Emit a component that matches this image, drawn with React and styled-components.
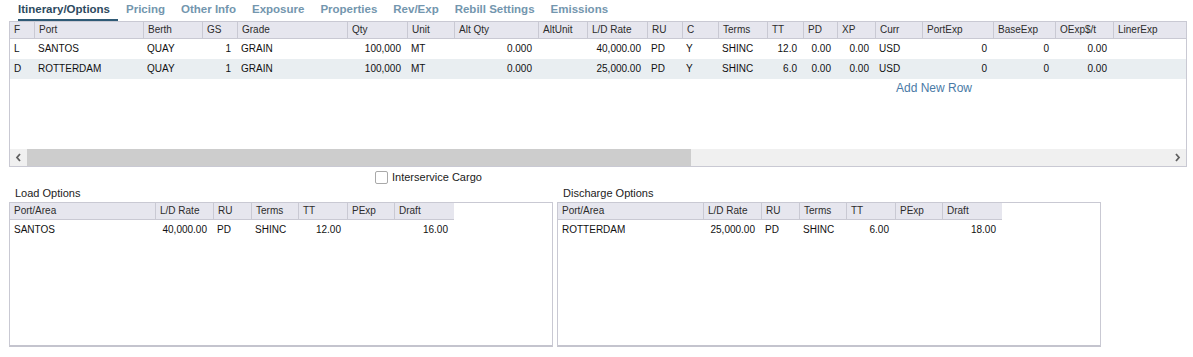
import React from 'react';
import styled, { createGlobalStyle } from 'styled-components';

const GlobalStyle = createGlobalStyle`
  body {
    margin: 0;
    background: #ffffff;
    font-family: "Liberation Sans", Arial, sans-serif;
    color: #1a1a1a;
  }
`;

const BORDER = '#c9c9d3';
const HEAD_BG = '#e6e6ee';

const columns = [
  { key: 'f', label: 'F', w: 24 },
  { key: 'port', label: 'Port', w: 109 },
  { key: 'berth', label: 'Berth', w: 59 },
  { key: 'gs', label: 'GS', w: 35, right: true },
  { key: 'grade', label: 'Grade', w: 110 },
  { key: 'qty', label: 'Qty', w: 60, right: true },
  { key: 'unit', label: 'Unit', w: 47 },
  { key: 'altQty', label: 'Alt Qty', w: 84, right: true },
  { key: 'altUnit', label: 'AltUnit', w: 49 },
  { key: 'ldRate', label: 'L/D Rate', w: 60, right: true },
  { key: 'ru', label: 'RU', w: 35 },
  { key: 'c', label: 'C', w: 36 },
  { key: 'terms', label: 'Terms', w: 49 },
  { key: 'tt', label: 'TT', w: 36, right: true },
  { key: 'pd', label: 'PD', w: 34, right: true },
  { key: 'xp', label: 'XP', w: 38, right: true },
  { key: 'curr', label: 'Curr', w: 47 },
  { key: 'portExp', label: 'PortExp', w: 71, right: true },
  { key: 'baseExp', label: 'BaseExp', w: 62, right: true },
  { key: 'oExp', label: 'OExp$/t', w: 58, right: true },
  { key: 'linerExp', label: 'LinerExp', w: 72, right: true },
];

const itinerary = [
  {
    f: 'L', port: 'SANTOS', berth: 'QUAY', gs: '1', grade: 'GRAIN', qty: '100,000', unit: 'MT',
    altQty: '0.000', altUnit: '', ldRate: '40,000.00', ru: 'PD', c: 'Y', terms: 'SHINC',
    tt: '12.0', pd: '0.00', xp: '0.00', curr: 'USD', portExp: '0', baseExp: '0', oExp: '0.00', linerExp: '',
  },
  {
    f: 'D', port: 'ROTTERDAM', berth: 'QUAY', gs: '1', grade: 'GRAIN', qty: '100,000', unit: 'MT',
    altQty: '0.000', altUnit: '', ldRate: '25,000.00', ru: 'PD', c: 'Y', terms: 'SHINC',
    tt: '6.0', pd: '0.00', xp: '0.00', curr: 'USD', portExp: '0', baseExp: '0', oExp: '0.00', linerExp: '',
  },
];

const optionColumns = [
  { key: 'area', label: 'Port/Area', w: 145 },
  { key: 'ldRate', label: 'L/D Rate', w: 58, right: true },
  { key: 'ru', label: 'RU', w: 38 },
  { key: 'terms', label: 'Terms', w: 47 },
  { key: 'tt', label: 'TT', w: 49, right: true },
  { key: 'pExp', label: 'PExp', w: 47, right: true },
  { key: 'draft', label: 'Draft', w: 60, right: true },
];

const loadOptions = [
  { area: 'SANTOS', ldRate: '40,000.00', ru: 'PD', terms: 'SHINC', tt: '12.00', pExp: '', draft: '16.00' },
];

const dischargeOptions = [
  { area: 'ROTTERDAM', ldRate: '25,000.00', ru: 'PD', terms: 'SHINC', tt: '6.00', pExp: '', draft: '18.00' },
];

const tabs = ['Itinerary/Options', 'Pricing', 'Other Info', 'Exposure', 'Properties', 'Rev/Exp', 'Rebill Settings', 'Emissions'];

const Page = styled.div`
  width: 1193px;
  height: 357px;
  overflow: hidden;
`;

const TabBar = styled.div`
  display: flex;
  height: 21px;
  padding-left: 18px;
`;

const Tab = styled.div`
  height: 19px;
  padding-right: 8px;
  margin-right: 8px;
  font-size: 11.5px;
  font-weight: bold;
  line-height: 18px;
  color: ${p => (p.$active ? '#2d4a60' : '#7396ae')};
  border-bottom: 2px solid ${p => (p.$active ? '#2f5a76' : 'transparent')};
`;

const GridFrame = styled.div`
  margin-left: 9px;
  width: 1176px;
  height: 144px;
  border: 1px solid ${BORDER};
  display: flex;
  flex-direction: column;
`;

const HeadRow = styled.div`
  display: flex;
  flex-shrink: 0;
  width: ${p => (p.$width ? `${p.$width}px` : 'auto')};
  height: 16px;
  background: ${HEAD_BG};
  border-bottom: 1px solid ${BORDER};
`;

const HeadCell = styled.div`
  width: ${p => p.$w}px;
  flex-shrink: 0;
  box-sizing: border-box;
  padding-left: 4px;
  font-size: 10px;
  line-height: 16px;
  color: #2c2c2c;
  border-left: ${p => (p.$first ? 'none' : `1px solid ${BORDER}`)};
  white-space: nowrap;
  overflow: hidden;
`;

const DataRow = styled.div`
  display: flex;
  flex-shrink: 0;
  height: 20px;
  background: ${p => (p.$alt ? '#e9eef1' : '#ffffff')};
`;

const Cell = styled.div`
  width: ${p => p.$w}px;
  flex-shrink: 0;
  box-sizing: border-box;
  padding: ${p => (p.$right ? '0 6px 0 0' : '0 0 0 4px')};
  text-align: ${p => (p.$right ? 'right' : 'left')};
  font-size: 10px;
  line-height: 20px;
  color: #111;
  white-space: nowrap;
  overflow: hidden;
`;

const AddRow = styled.div`
  height: 18px;
  padding-left: 886px;
  font-size: 12px;
  line-height: 18px;
  color: #4a7aa6;
`;

const Filler = styled.div`
  flex: 1;
`;

const ScrollBar = styled.div`
  display: flex;
  height: 17px;
  background: #f0f0f0;
  flex-shrink: 0;
`;

const ScrollArrow = styled.div`
  width: 17px;
  display: flex;
  align-items: center;
  justify-content: center;
  color: #606060;
`;

const ScrollTrack = styled.div`
  flex: 1;
  display: flex;
`;

const ScrollThumb = styled.div`
  width: 664px;
  background: #cdcdcd;
`;

const CheckRow = styled.div`
  display: flex;
  align-items: center;
  height: 20px;
  padding-left: 375px;
`;

const CheckBox = styled.div`
  width: 11px;
  height: 11px;
  border: 1px solid #a9a9a9;
  border-radius: 2px;
  background: #fff;
  margin-right: 4px;
`;

const CheckLabel = styled.span`
  font-size: 11px;
  color: #1a1a1a;
`;

const OptionsRow = styled.div`
  display: flex;
  gap: 4px;
  padding-left: 9px;
`;

const Panel = styled.div`
  width: 544px;
  display: flex;
  flex-direction: column;
`;

const PanelTitle = styled.div`
  height: 15px;
  padding-left: 6px;
  font-size: 11px;
  line-height: 13px;
  color: #222;
`;

const PanelBox = styled.div`
  height: 142px;
  border: 1px solid ${BORDER};
  border-bottom: 2px solid #c4c4ce;
  background: #fff;
`;

const ArrowIcon = ({ dir }) => (
  <svg width="7" height="9" viewBox="0 0 7 9">
    <path
      d={dir === 'left' ? 'M5 1 L2 4.5 L5 8' : 'M2 1 L5 4.5 L2 8'}
      fill="none"
      stroke="currentColor"
      strokeWidth="1.8"
    />
  </svg>
);

const OptionsGrid = ({ title, rows }) => (
  <Panel>
    <PanelTitle>{title}</PanelTitle>
    <PanelBox>
      <HeadRow $width={444}>
        {optionColumns.map((c, i) => (
          <HeadCell key={c.key} $w={c.w} $first={i === 0}>{c.label}</HeadCell>
        ))}
      </HeadRow>
      {rows.map((r, ri) => (
        <DataRow key={ri}>
          {optionColumns.map(c => (
            <Cell key={c.key} $w={c.w} $right={c.right}>{r[c.key]}</Cell>
          ))}
        </DataRow>
      ))}
    </PanelBox>
  </Panel>
);

export default function App() {
  return (
    <Page>
      <GlobalStyle />
      <TabBar>
        {tabs.map((t, i) => (
          <Tab key={t} $active={i === 0}>{t}</Tab>
        ))}
      </TabBar>

      <GridFrame>
        <HeadRow>
          {columns.map((c, i) => (
            <HeadCell key={c.key} $w={c.w} $first={i === 0}>{c.label}</HeadCell>
          ))}
        </HeadRow>
        {itinerary.map((r, ri) => (
          <DataRow key={ri} $alt={ri % 2 === 1}>
            {columns.map(c => (
              <Cell key={c.key} $w={c.w} $right={c.right}>{r[c.key]}</Cell>
            ))}
          </DataRow>
        ))}
        <AddRow>Add New Row</AddRow>
        <Filler />
        <ScrollBar>
          <ScrollArrow><ArrowIcon dir="left" /></ScrollArrow>
          <ScrollTrack>
            <ScrollThumb />
          </ScrollTrack>
          <ScrollArrow><ArrowIcon dir="right" /></ScrollArrow>
        </ScrollBar>
      </GridFrame>

      <CheckRow>
        <CheckBox />
        <CheckLabel>Interservice Cargo</CheckLabel>
      </CheckRow>

      <OptionsRow>
        <OptionsGrid title="Load Options" rows={loadOptions} />
        <OptionsGrid title="Discharge Options" rows={dischargeOptions} />
      </OptionsRow>
    </Page>
  );
}
